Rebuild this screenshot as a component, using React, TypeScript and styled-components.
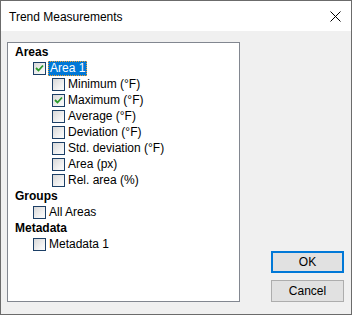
import React from "react";
import styled, { createGlobalStyle } from "styled-components";

const GlobalStyle = createGlobalStyle`
  html, body {
    margin: 0;
    padding: 0;
    background: #ffffff;
  }
  body {
    font-family: "Liberation Sans", Arial, sans-serif;
    font-size: 12px;
    color: #000;
  }
`;

const Window = styled.div`
  width: 352px;
  height: 315px;
  box-sizing: border-box;
  border: 1px solid #6b6b6b;
  display: flex;
  flex-direction: column;
  background: #f0f0f0;
`;

const TitleBar = styled.div`
  height: 30px;
  background: #ffffff;
  display: flex;
  align-items: center;
  justify-content: space-between;
  padding: 0 9px 0 8px;
  flex-shrink: 0;
`;

const Title = styled.span`
  font-size: 12px;
  color: #000;
  margin-top: 1px;
`;

const CloseIcon = styled.svg`
  width: 11px;
  height: 11px;
  margin-right: 1px;
`;

const Body = styled.div`
  flex: 1;
  display: flex;
  padding: 11px 7px 12px 6px;
`;

const TreeBox = styled.div`
  width: 233px;
  box-sizing: border-box;
  border: 1px solid #828790;
  background: #ffffff;
  padding: 1px 0 0 6px;
`;

const Row = styled.div<{ $level: number }>`
  height: 16px;
  display: flex;
  align-items: center;
  padding-left: ${(p) => p.$level * 19}px;
`;

const Header = styled.span`
  font-weight: bold;
  padding-left: 1px;
`;

const Box = styled.span`
  width: 13px;
  height: 13px;
  box-sizing: border-box;
  border: 1px solid #1c3f66;
  background: linear-gradient(135deg, #d8d8d8 0%, #f4f4f4 70%, #fbfbfb 100%);
  display: inline-flex;
  align-items: center;
  justify-content: center;
  flex-shrink: 0;
`;

const Label = styled.span<{ $selected?: boolean }>`
  margin-left: ${(p) => (p.$selected ? "2px" : "3px")};
  padding: 0 ${(p) => (p.$selected ? "2px" : "0")};
  height: 15px;
  line-height: 15px;
  box-sizing: border-box;
  white-space: nowrap;
  ${(p) =>
    p.$selected &&
    `
    background: #0078d7;
    color: #fff;
    outline: 1px dotted #f0a030;
    outline-offset: -1px;
  `}
`;

const Side = styled.div`
  flex: 1;
  display: flex;
  flex-direction: column;
  justify-content: flex-end;
  align-items: flex-end;
  gap: 7px;
`;

const Button = styled.button<{ $default?: boolean }>`
  width: 73px;
  height: 22px;
  box-sizing: border-box;
  font-family: "Liberation Sans", Arial, sans-serif;
  font-size: 12px;
  color: #000;
  background: #e1e1e1;
  border: ${(p) => (p.$default ? "2px solid #0078d7" : "1px solid #adadad")};
  padding: 0;
  margin: 0;
`;

const Check = () => (
  <svg width="9" height="8" viewBox="0 0 9 8">
    <path d="M1 4 L3.5 6.5 L8 1.5" fill="none" stroke="#2a9a2a" strokeWidth="1.8" />
  </svg>
);

type Item = { level: number; text: string; kind: "header" | "check"; checked?: boolean; selected?: boolean };

const items: Item[] = [
  { level: 0, text: "Areas", kind: "header" },
  { level: 1, text: "Area 1", kind: "check", checked: true, selected: true },
  { level: 2, text: "Minimum (°F)", kind: "check" },
  { level: 2, text: "Maximum (°F)", kind: "check", checked: true },
  { level: 2, text: "Average (°F)", kind: "check" },
  { level: 2, text: "Deviation (°F)", kind: "check" },
  { level: 2, text: "Std. deviation (°F)", kind: "check" },
  { level: 2, text: "Area (px)", kind: "check" },
  { level: 2, text: "Rel. area (%)", kind: "check" },
  { level: 0, text: "Groups", kind: "header" },
  { level: 1, text: "All Areas", kind: "check" },
  { level: 0, text: "Metadata", kind: "header" },
  { level: 1, text: "Metadata 1", kind: "check" },
];

const App: React.FC = () => {
  return (
    <>
      <GlobalStyle />
      <Window>
        <TitleBar>
          <Title>Trend Measurements</Title>
          <CloseIcon viewBox="0 0 11 11">
            <path d="M0.5 0.5 L10.5 10.5 M10.5 0.5 L0.5 10.5" stroke="#000" strokeWidth="1" />
          </CloseIcon>
        </TitleBar>
        <Body>
          <TreeBox>
            {items.map((item, i) => (
              <Row key={i} $level={item.level}>
                {item.kind === "header" ? (
                  <Header>{item.text}</Header>
                ) : (
                  <>
                    <Box>{item.checked && <Check />}</Box>
                    <Label $selected={item.selected}>{item.text}</Label>
                  </>
                )}
              </Row>
            ))}
          </TreeBox>
          <Side>
            <Button $default>OK</Button>
            <Button>Cancel</Button>
          </Side>
        </Body>
      </Window>
    </>
  );
};

export default App;
